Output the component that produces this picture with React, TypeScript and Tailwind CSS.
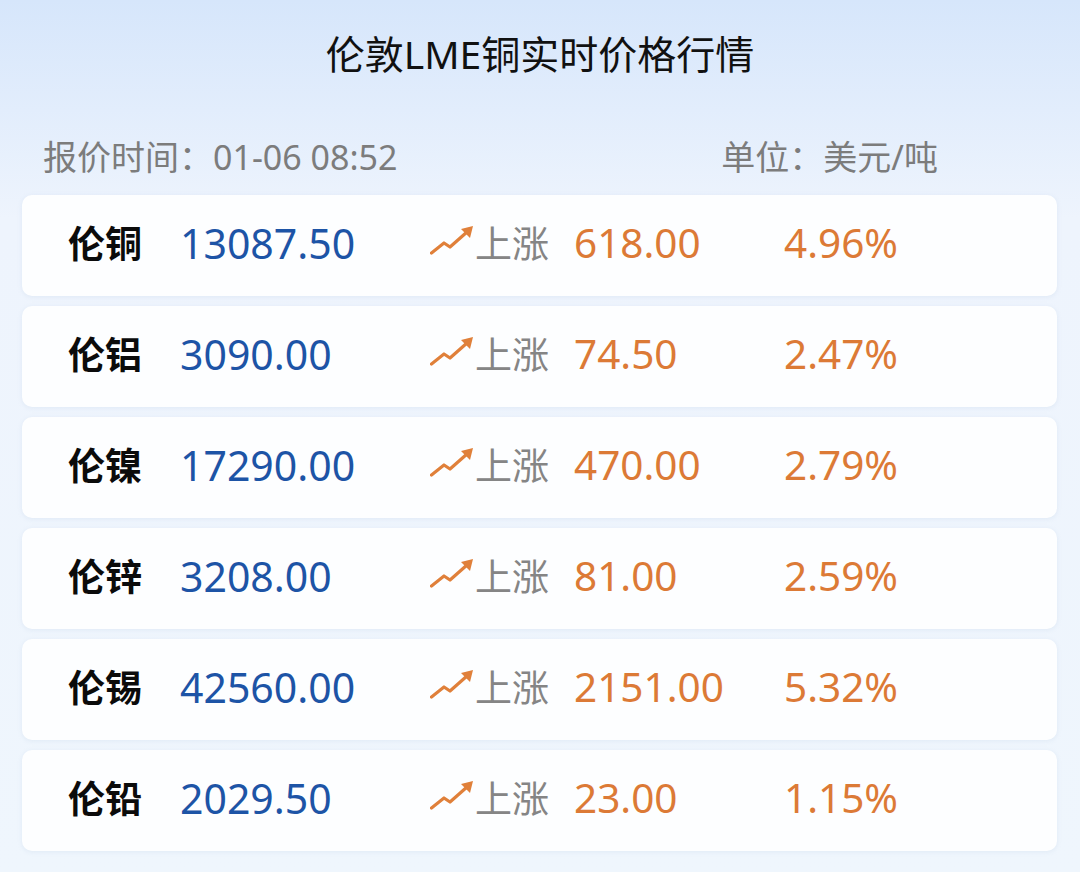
import React from "react";

const rows = [
  { name: "伦铜", price: "13087.50", change: "618.00", pct: "4.96%" },
  { name: "伦铝", price: "3090.00", change: "74.50", pct: "2.47%" },
  { name: "伦镍", price: "17290.00", change: "470.00", pct: "2.79%" },
  { name: "伦锌", price: "3208.00", change: "81.00", pct: "2.59%" },
  { name: "伦锡", price: "42560.00", change: "2151.00", pct: "5.32%" },
  { name: "伦铅", price: "2029.50", change: "23.00", pct: "1.15%" },
];

function TrendIcon() {
  return (
    <svg width="44" height="32" viewBox="0 0 44 32" fill="none">
      <polyline
        points="1.5,28 14,18 20,22 37,7"
        stroke="#e0803a"
        strokeWidth="3.2"
        strokeLinecap="round"
        strokeLinejoin="round"
      />
      <polygon points="43,1 31,4 40,13" fill="#e0803a" />
    </svg>
  );
}

export default function App() {
  const font = { fontFamily: '"Noto Sans", "Noto Sans CJK SC", sans-serif' };
  return (
    <div
      className="w-[1080px] h-[872px] overflow-hidden bg-gradient-to-b from-[#d6e6fb] via-[#eef4fd] via-25% to-[#eff6fd]"
      style={font}
    >
      <div className="h-[108px] flex items-center justify-center pb-[2px]">
        <h1 className="text-[39px] text-[#111] leading-none">伦敦LME铜实时价格行情</h1>
      </div>
      <div className="flex justify-between items-center pl-[43px] pr-[142px] h-[87px] pt-[10px] text-[34px] text-[#7c7c7c] leading-none">
        <span>报价时间：01-06 08:52</span>
        <span>单位：美元/吨</span>
      </div>
      <div className="flex flex-col gap-[10px] pl-[22px] pr-[23px]">
        {rows.map((r, i) => (
          <div
            key={i}
            className="h-[101px] rounded-[10px] bg-[#fdfeff] shadow-[0_1px_4px_rgba(180,200,225,0.25)] flex items-center pl-[46px] pb-[5px] leading-none"
          >
            <span className="w-[112px] text-[37px] font-bold text-[#0b0b0b]">{r.name}</span>
            <span className="w-[250px] text-[41px] text-[#1d54a6]">{r.price}</span>
            <span className="w-[45px] flex items-center -mt-[4px]">
              <TrendIcon />
            </span>
            <span className="w-[99px] text-[37px] text-[#858585]">上涨</span>
            <span className="w-[210px] text-[40.5px] text-[#dc7a36]">{r.change}</span>
            <span className="text-[40.5px] text-[#dc7a36]">{r.pct}</span>
          </div>
        ))}
      </div>
    </div>
  );
}
